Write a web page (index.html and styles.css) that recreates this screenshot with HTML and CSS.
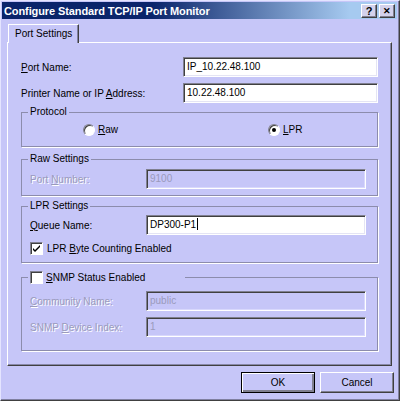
FILE: index.html
```html
<!DOCTYPE html>
<html lang="en">
<head>
    <meta charset="UTF-8">
    <title>Configure Standard TCP/IP Port Monitor</title>
    <link rel="stylesheet" href="styles.css">
</head>
<body>

<div class="window">
    <div class="titlebar">
        <span class="title">Configure Standard TCP/IP Port Monitor</span>
        <div class="title-btns">
            <span class="tbtn">?</span>
            <span class="tbtn close">&#x2715;</span>
        </div>
    </div>

    <div class="tabs">
        <div class="tab">Port Settings</div>
    </div>

    <div class="panel">
        <div class="row">
            <label><u>P</u>ort Name:</label>
            <div class="input wide">IP_10.22.48.100</div>
        </div>
        <div class="row">
            <label>Printer Name or IP <u>A</u>ddress:</label>
            <div class="input wide">10.22.48.100</div>
        </div>

        <fieldset class="group protocol">
            <legend>Protocol</legend>
            <div class="options">
                <span class="opt"><span class="radio"></span><span><u>R</u>aw</span></span>
                <span class="opt"><span class="radio on"></span><span><u>L</u>PR</span></span>
            </div>
        </fieldset>

        <fieldset class="group raw">
            <legend>Raw Settings</legend>
            <div class="row">
                <label class="disabled">Port <u>N</u>umber:</label>
                <div class="input mid off">9100</div>
            </div>
        </fieldset>

        <fieldset class="group lpr">
            <legend>LPR Settings</legend>
            <div class="row">
                <label><u>Q</u>ueue Name:</label>
                <div class="input mid">DP300-P1<span class="caret"></span></div>
            </div>
            <div class="check-row">
                <span class="check">
                    <svg width="9" height="9" viewBox="0 0 9 9"><path d="M1 4 L3 6 L8 1 L8 3 L3 8 L1 6 Z" fill="#000"/></svg>
                </span>
                <span>LPR <u>B</u>yte Counting Enabled</span>
            </div>
        </fieldset>

        <fieldset class="group snmp">
            <legend><span class="check"></span><span><u>S</u>NMP Status Enabled</span></legend>
            <div class="row">
                <label class="disabled"><u>C</u>ommunity Name:</label>
                <div class="input mid off">public</div>
            </div>
            <div class="row">
                <label class="disabled">SNMP <u>D</u>evice Index:</label>
                <div class="input mid off">1</div>
            </div>
        </fieldset>
    </div>

    <div class="buttons">
        <button class="btn default">OK</button>
        <button class="btn">Cancel</button>
    </div>
</div>

</body>
</html>
```

FILE: styles.css
```css
body {
    margin: 0;
    font-family: 'Liberation Sans', Arial, sans-serif;
    font-size: 10px;
    color: #000;
}
.window {
    width: 400px;
    height: 401px;
    box-sizing: border-box;
    background-color: #c6c6f8;
    border: 1px solid;
    border-color: #e4e4ff #404040 #404040 #e4e4ff;
    box-shadow: inset -1px -1px 0 #8080a0;
    padding: 1px 2px 2px 1px;
    display: flex;
    flex-direction: column;
}

/* Title bar */
.titlebar {
    height: 17px;
    display: flex;
    align-items: center;
    background: linear-gradient(to right, #0a246a 38%, #a6caf0 88%);
}
.title {
    color: white;
    font-weight: bold;
    font-size: 11px;
    padding-left: 2px;
    letter-spacing: -0.1px;
}
.title-btns {
    margin-left: auto;
    display: flex;
    gap: 2px;
    padding-right: 2px;
}
.tbtn {
    width: 14px;
    height: 12px;
    background-color: #d4d2ec;
    border: 1px solid;
    border-color: #fff #404040 #404040 #fff;
    box-shadow: inset -1px -1px 0 #808090;
    font-weight: bold;
    font-size: 11px;
    line-height: 12px;
    text-align: center;
}
.tbtn.close {
    font-size: 9px;
}

/* Tab strip */
.tabs {
    display: flex;
    padding: 5px 0 0 6px;
}
.tab {
    height: 18px;
    line-height: 17px;
    padding: 0 6px;
    border: 1px solid;
    border-color: #fff #404040 transparent #fff;
    border-bottom: none;
    box-shadow: inset -1px 0 0 #8080a0;
    background-color: #c6c6f8;
    margin-bottom: -1px;
    position: relative;
    z-index: 1;
}

.panel {
    height: 324px;
    box-sizing: border-box;
    margin: 0 5px 0 5px;
    padding: 14px 13px 0 13px;
    border: 1px solid;
    border-color: #fff #404040 #404040 #fff;
    box-shadow: inset -1px -1px 0 #8888a8;
}

.row {
    display: flex;
    align-items: center;
    justify-content: space-between;
    height: 20px;
}
.row + .row {
    margin-top: 6px;
}
.disabled {
    color: #9a9abc;
    text-shadow: 1px 1px 0 #fff;
}

/* Text boxes */
.input {
    height: 20px;
    box-sizing: border-box;
    background-color: #fff;
    border: 1px solid;
    border-color: #808090 #fff #fff #808090;
    box-shadow: inset 1px 1px 0 #404040, inset -1px -1px 0 #e4e4f4;
    padding: 0 3px;
    line-height: 18px;
    white-space: nowrap;
}
.input.wide { width: 195px; }
.input.mid { width: 220px; }
.input.off {
    background-color: #c6c6f8;
    color: #9a9abc;
    box-shadow: inset 1px 1px 0 #404040, inset -1px -1px 0 #d8d8fc;
}
.caret {
    display: inline-block;
    width: 1px;
    height: 12px;
    background-color: #000;
    vertical-align: -2px;
    margin-left: 1px;
}

/* Group boxes */
.group {
    margin: 0;
    padding: 0 11px 0 8px;
    border: 1px solid #8c8cac;
    box-shadow: 1px 1px 0 #fff;
    min-width: 0;
}
.group legend {
    margin-left: -2px;
    padding: 0 2px;
    line-height: 12px;
    display: flex;
    align-items: center;
    gap: 3px;
}
.protocol { margin-top: 3px; padding-top: 5px; padding-bottom: 10px; }
.raw { margin-top: 6px; padding-top: 4px; padding-bottom: 6px; }
.lpr { margin-top: 4px; padding-top: 3px; padding-bottom: 7px; }
.snmp { margin-top: 8px; padding-top: 7px; padding-bottom: 13px; }
.snmp legend { line-height: 13px; padding-right: 40px; }

.options {
    display: flex;
    height: 13px;
    align-items: center;
}
.opt {
    display: flex;
    align-items: center;
    gap: 3px;
}
.opt:first-child {
    margin-left: 53px;
    width: 185px;
}
.radio {
    width: 10px;
    height: 10px;
    border-radius: 50%;
    background-color: #fff;
    border: 1px solid;
    border-color: #808090 #fff #fff #808090;
    box-shadow: inset 1px 1px 0 #404040;
    display: flex;
    align-items: center;
    justify-content: center;
}
.radio.on::after {
    content: "";
    width: 4px;
    height: 4px;
    border-radius: 50%;
    background-color: #000;
}

.check-row {
    display: flex;
    align-items: center;
    gap: 4px;
    margin-top: 7px;
    height: 13px;
}
.check {
    width: 11px;
    height: 11px;
    background-color: #fff;
    border: 1px solid;
    border-color: #808090 #fff #fff #808090;
    box-shadow: inset 1px 1px 0 #404040;
    display: flex;
    align-items: center;
    justify-content: center;
}

/* Dialog buttons */
.buttons {
    display: flex;
    justify-content: flex-end;
    gap: 5px;
    margin-top: 6px;
    padding-right: 3px;
}
.btn {
    width: 74px;
    height: 21px;
    font-family: inherit;
    font-size: 10px;
    background-color: #c6c6f8;
    border: 1px solid;
    border-color: #fff #404040 #404040 #fff;
    box-shadow: inset -1px -1px 0 #808090;
    padding: 0;
}
.btn.default {
    border: 1px solid #000;
    box-shadow: inset 1px 1px 0 #fff, inset -2px -2px 0 #808090;
}
```
